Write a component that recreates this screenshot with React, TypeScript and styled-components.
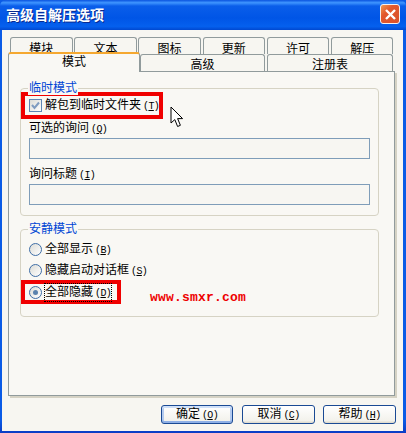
import styled, { createGlobalStyle } from "styled-components";

const GlobalStyle = createGlobalStyle`
    html, body {
        margin: 0;
        padding: 0;
        background: #fff;
    }
    * {
        box-sizing: border-box;
    }
`;

const topTabs = ['模块', '文本', '图标', '更新', '许可', '解压'];

const App = () => {
    return (
        <Window>
            <GlobalStyle />
            <TitleBar>
                <TitleText>高级自解压选项</TitleText>
                <CloseButton>
                    <svg width="13" height="13" viewBox="0 0 13 13">
                        <path d="M2 2 L11 11 M11 2 L2 11" stroke="#fff" strokeWidth="2.4" fill="none" />
                    </svg>
                </CloseButton>
            </TitleBar>
            <Body>
                <TabRow>
                    {topTabs.map((name) => (
                        <Tab key={name}>{name}</Tab>
                    ))}
                </TabRow>
                <SecondTabRow>
                    <ActiveTab>模式</ActiveTab>
                    <WideTab $width={125}>高级</WideTab>
                    <WideTab $width={126}>注册表</WideTab>
                </SecondTabRow>
                <Panel>
                    <Group $height={128}>
                        <Legend>临时模式</Legend>
                        <Highlight $width={142} $height={27}>
                            <CheckRow>
                                <CheckBox>
                                    <svg width="9" height="9" viewBox="0 0 9 9">
                                        <path d="M1 4 L3.5 7 L8 1.5" stroke="#7f9cc0" strokeWidth="2" fill="none" />
                                    </svg>
                                </CheckBox>
                                <span>解包到临时文件夹<Key>(<u>T</u>)</Key></span>
                            </CheckRow>
                        </Highlight>
                        <FieldLabel>可选的询问<Key>(<u>Q</u>)</Key></FieldLabel>
                        <TextInput />
                        <FieldLabel>询问标题<Key>(<u>I</u>)</Key></FieldLabel>
                        <TextInput />
                    </Group>
                    <Group $height={88} $second>
                        <Legend>安静模式</Legend>
                        <RadioList>
                            <RadioRow>
                                <Radio />
                                <span>全部显示<Key>(<u>B</u>)</Key></span>
                            </RadioRow>
                            <RadioRow>
                                <Radio />
                                <span>隐藏启动对话框<Key>(<u>S</u>)</Key></span>
                            </RadioRow>
                        </RadioList>
                        <Highlight $width={100} $height={24}>
                            <RadioRow>
                                <Radio $checked />
                                <Focused>全部隐藏<Key>(<u>D</u>)</Key></Focused>
                            </RadioRow>
                        </Highlight>
                        <Watermark>www.smxr.com</Watermark>
                    </Group>
                    <Cursor width="14" height="23" viewBox="0 0 14 23">
                        <path d="M1 1 L1 17 L4.8 13.6 L7.6 20.5 L10.4 19.3 L7.6 12.6 L12.6 12.6 Z" fill="#fff" stroke="#000" strokeWidth="1" />
                    </Cursor>
                </Panel>
                <Footer>
                    <Button $isDefault><span>确定<Key>(<u>O</u>)</Key></span></Button>
                    <Button><span>取消<Key>(<u>C</u>)</Key></span></Button>
                    <Button><span>帮助<Key>(<u>H</u>)</Key></span></Button>
                </Footer>
            </Body>
        </Window>
    );
};

const FONT = `"Noto Sans CJK SC", "Liberation Sans", sans-serif`;

const Window = styled.div`
    width: 406px;
    height: 433px;
    display: flex;
    flex-direction: column;
    overflow: hidden;
    background: linear-gradient(180deg, #0a5be6 0%, #0a5be6 97%, #0a3cc4 100%);
    font-family: ${FONT};
    font-size: 12px;
    line-height: 16px;
    color: #000;
`;

const TitleBar = styled.div`
    height: 30px;
    flex-shrink: 0;
    display: flex;
    align-items: center;
    justify-content: space-between;
    padding: 0 6px 2px 6px;
    border-radius: 6px 6px 0 0;
    background: linear-gradient(180deg, #0a53df 0%, #3f95ff 9%, #0a5eea 20%, #0055e6 60%, #0560ee 88%, #0048d0 100%);
`;

const TitleText = styled.div`
    color: #fff;
    font-size: 14px;
    font-weight: 700;
    line-height: 18px;
    text-shadow: 1px 1px 0 #0a2a90;
`;

const CloseButton = styled.div`
    width: 20px;
    height: 20px;
    display: flex;
    align-items: center;
    justify-content: center;
    border: 1px solid #f4f0ee;
    border-radius: 3px;
    background: linear-gradient(135deg, #f09a50 0%, #e2582c 35%, #d8502a 100%);
`;

const Body = styled.div`
    flex: 1;
    display: flex;
    flex-direction: column;
    margin: 0 3px 2px 2px;
    padding: 7px 7px 0 6px;
    background: #f7f6f1;
`;

const TabRow = styled.div`
    display: flex;
    align-items: flex-end;
    height: 17px;
    gap: 1.7px;
    padding-left: 2px;
`;

const SecondTabRow = styled(TabRow)`
    gap: 2px;
    padding-left: 0;
`;

const TabBase = styled.div`
    display: flex;
    align-items: center;
    justify-content: center;
    background: #f7f6f1;
    border: 1px solid #919b9c;
    border-bottom: none;
    border-radius: 3px 3px 0 0;
`;

const Tab = styled(TabBase)`
    width: 62.5px;
    height: 17px;
    padding-top: 3px;
`;

const WideTab = styled(TabBase)<{ $width: number }>`
    width: ${({ $width }) => $width}px;
    height: 17px;
    padding-top: 2px;
`;

const ActiveTab = styled(TabBase)`
    position: relative;
    z-index: 1;
    width: 132px;
    height: 20px;
    margin-bottom: -1px;
    margin-right: -2px;
    padding-bottom: 4px;
    background: #f9f8f4;
    border-top: 2px solid #f5a830;
`;

const Panel = styled.div`
    position: relative;
    width: 387px;
    height: 325px;
    padding: 16px 15px 0 11px;
    background: #f9f8f4;
    border: 1px solid #919b9c;
    box-shadow: 2px 2px 0 #d5d2c4;
`;

const Group = styled.div<{ $height: number; $second?: boolean }>`
    position: relative;
    height: ${({ $height }) => $height}px;
    margin-top: ${({ $second }) => ($second ? 13 : 0)}px;
    padding: 3px 8px 0 8px;
    border: 1px solid #d6d3c4;
    border-radius: 4px;
`;

const Legend = styled.div`
    position: absolute;
    top: -10px;
    left: 7px;
    padding: 0 1px;
    background: #f9f8f4;
    color: #0046d5;
`;

const Highlight = styled.div<{ $width: number; $height: number }>`
    display: flex;
    align-items: center;
    width: ${({ $width }) => $width}px;
    height: ${({ $height }) => $height}px;
    margin-left: -8px;
    padding-left: 4px;
    border: 4px solid #f00000;
`;

const CheckRow = styled.div`
    display: flex;
    align-items: center;
    gap: 3px;
    white-space: nowrap;
`;

const CheckBox = styled.div`
    width: 13px;
    height: 13px;
    display: flex;
    align-items: center;
    justify-content: center;
    border: 1px solid #5f86b4;
    background: linear-gradient(135deg, #dcdcd6 0%, #fff 100%);
`;

const Key = styled.span`
    margin-left: 2px;
    font-family: "Liberation Mono", monospace;
    font-size: 10px;
    letter-spacing: -0.6px;
`;

const FieldLabel = styled.div`
    height: 16px;
    margin-bottom: 3px;
    white-space: nowrap;

    & + div + & {
        margin-top: 6px;
    }
`;

const TextInput = styled.div`
    width: 341px;
    height: 21px;
    border: 1px solid #7f9db9;
    background: #f7f6f2;
`;

const RadioList = styled.div`
    display: flex;
    flex-direction: column;
    gap: 5px;
    padding-top: 8px;
    margin-bottom: 2px;
`;

const RadioRow = styled.div`
    display: flex;
    align-items: center;
    gap: 3px;
    height: 16px;
    white-space: nowrap;
`;

const Radio = styled.div<{ $checked?: boolean }>`
    width: 13px;
    height: 13px;
    display: flex;
    align-items: center;
    justify-content: center;
    border: 1px solid #3f6ea6;
    border-radius: 50%;
    background: linear-gradient(135deg, #dcdcd6 0%, #fff 100%);

    &::after {
        content: "";
        display: ${({ $checked }) => ($checked ? 'block' : 'none')};
        width: 5px;
        height: 5px;
        border-radius: 50%;
        background: #5a82ad;
    }
`;

const Focused = styled.span`
    width: 68px;
    margin-left: -1px;
    padding-left: 1px;
    outline: 1px dotted #000;
    outline-offset: -1px;
`;

const Watermark = styled.div`
    position: absolute;
    top: 61px;
    left: 129px;
    color: #ee0000;
    font-family: "Liberation Mono", monospace;
    font-size: 13px;
    font-weight: 700;
    line-height: 14px;
    letter-spacing: 0.2px;
`;

const Cursor = styled.svg`
    position: absolute;
    top: 34px;
    left: 161px;
`;

const Footer = styled.div`
    display: flex;
    justify-content: flex-end;
    gap: 8px;
    width: 388px;
    margin-top: 9px;
`;

const Button = styled.div<{ $isDefault?: boolean }>`
    width: ${({ $isDefault }) => ($isDefault ? 72 : 73)}px;
    height: 19px;
    margin-right: ${({ $isDefault }) => ($isDefault ? 1 : 0)}px;
    display: flex;
    align-items: center;
    justify-content: center;
    white-space: nowrap;
    border: 1px solid #1a4a94;
    border-radius: 3px;
    background: linear-gradient(180deg, #ffffff 0%, #f3f2ec 85%, #dcd8ca 100%);
    box-shadow: ${({ $isDefault }) => ($isDefault ? 'inset 0 2px 0 #cfe0f8, inset 0 -2px 0 #8fb0e6, inset 2px 0 0 #b4cbef, inset -2px 0 0 #b4cbef' : 'none')};
`;

export default App;
